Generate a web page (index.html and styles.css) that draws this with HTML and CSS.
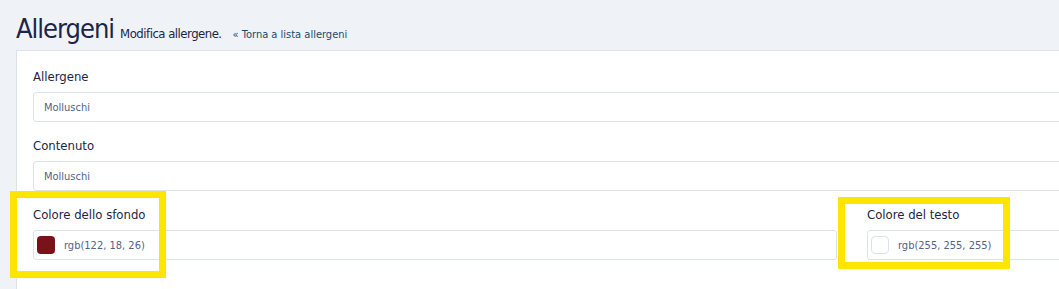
FILE: index.html
```html
<!DOCTYPE html>
<html lang="it">
<head>
  <meta charset="UTF-8">
  <title>Allergeni - Modifica allergene</title>
  <link rel="stylesheet" href="styles.css">
</head>
<body>
  <div class="page-head">
    <h1>Allergeni</h1>
    <span class="subtitle">Modifica allergene.</span>
    <a class="back-link" href="#">&#171; Torna a lista allergeni</a>
  </div>

  <div class="card">
    <div class="field">
      <label>Allergene</label>
      <div class="input">Molluschi</div>
    </div>
    <div class="field">
      <label>Contenuto</label>
      <div class="input">Molluschi</div>
    </div>
    <div class="row">
      <div class="field">
        <label>Colore dello sfondo</label>
        <div class="input color-input">
          <span class="swatch" style="background: rgb(122, 18, 26);"></span>
          rgb(122, 18, 26)
        </div>
        <div class="mark mark-left"></div>
      </div>
      <div class="field">
        <label>Colore del testo</label>
        <div class="input color-input">
          <span class="swatch swatch-light" style="background: rgb(255, 255, 255);"></span>
          rgb(255, 255, 255)
        </div>
        <div class="mark mark-right"></div>
      </div>
    </div>
  </div>
</body>
</html>
```

FILE: styles.css
```css
html, body {
  margin: 0;
  padding: 0;
  background-color: #eff2f7;
  font-family: "DejaVu Sans Condensed", "Liberation Sans", sans-serif;
  color: #1c2545;
  overflow: hidden;
  width: 1059px;
  height: 289px;
}
.page-head {
  display: flex;
  align-items: baseline;
  padding: 14px 16px 0 16px;
  height: 36px;
}
.page-head h1 {
  margin: 0 6px 0 0;
  font-size: 27px;
  font-weight: normal;
  letter-spacing: -1px;
  line-height: 30px;
  color: #1c2545;
}
.subtitle {
  font-size: 13px;
  letter-spacing: -0.5px;
  margin-right: 11px;
}
.back-link {
  font-size: 11px;
  color: #1b4a6b;
  text-decoration: none;
}
.card {
  margin-left: 16px;
  width: 1700px;
  background: white;
  border: 1px solid #dde2ea;
  border-right: none;
  border-bottom: none;
  padding: 18px 16px 14px 16px;
}
.field {
  position: relative;
  margin-bottom: 16px;
}
.field label {
  display: block;
  font-size: 13px;
  height: 15px;
  line-height: 15px;
  margin-bottom: 8px;
  color: #1c2545;
}
.input {
  box-sizing: border-box;
  height: 30px;
  border: 1px solid #dde2ea;
  border-radius: 3px;
  padding: 0 10px;
  display: flex;
  align-items: center;
  font-size: 11px;
  color: #52638a;
}
.row {
  display: grid;
  grid-template-columns: 804px 804px;
  gap: 30px;
}
.color-input {
  padding-left: 3px;
  gap: 9px;
}
.swatch {
  width: 18px;
  height: 18px;
  border-radius: 4px;
  display: inline-block;
}
.swatch-light {
  border: 1px solid #dde2ea;
  width: 16px;
  height: 16px;
}
.mark {
  position: absolute;
  border: 7px solid #ffe500;
}
.mark-left {
  left: -23px;
  top: -16px;
  width: 142px;
  height: 73px;
}
.mark-right {
  left: -29px;
  top: -10px;
  width: 158px;
  height: 58px;
}
```
